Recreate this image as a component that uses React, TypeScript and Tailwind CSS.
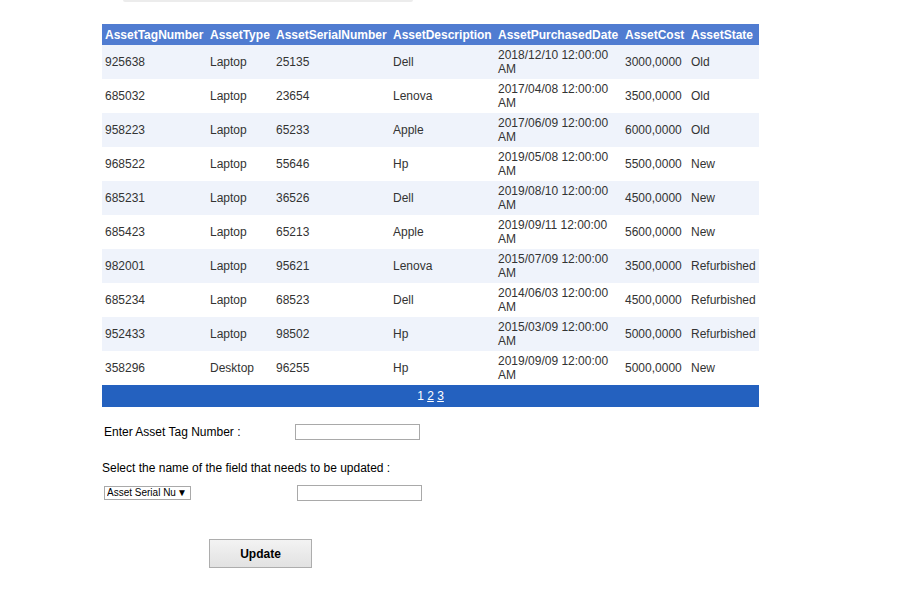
const rows = [
    ['925638', 'Laptop', '25135', 'Dell', '2018/12/10 12:00:00 AM', '3000,0000', 'Old'],
    ['685032', 'Laptop', '23654', 'Lenova', '2017/04/08 12:00:00 AM', '3500,0000', 'Old'],
    ['958223', 'Laptop', '65233', 'Apple', '2017/06/09 12:00:00 AM', '6000,0000', 'Old'],
    ['968522', 'Laptop', '55646', 'Hp', '2019/05/08 12:00:00 AM', '5500,0000', 'New'],
    ['685231', 'Laptop', '36526', 'Dell', '2019/08/10 12:00:00 AM', '4500,0000', 'New'],
    ['685423', 'Laptop', '65213', 'Apple', '2019/09/11 12:00:00 AM', '5600,0000', 'New'],
    ['982001', 'Laptop', '95621', 'Lenova', '2015/07/09 12:00:00 AM', '3500,0000', 'Refurbished'],
    ['685234', 'Laptop', '68523', 'Dell', '2014/06/03 12:00:00 AM', '4500,0000', 'Refurbished'],
    ['952433', 'Laptop', '98502', 'Hp', '2015/03/09 12:00:00 AM', '5000,0000', 'Refurbished'],
    ['358296', 'Desktop', '96255', 'Hp', '2019/09/09 12:00:00 AM', '5000,0000', 'New'],
]

const headers = ['AssetTagNumber', 'AssetType', 'AssetSerialNumber', 'AssetDescription', 'AssetPurchasedDate', 'AssetCost', 'AssetState']
const widths = ['w-[105px]', 'w-[66px]', 'w-[117px]', 'w-[105px]', 'w-[127px]', 'w-[66px]', 'w-[71px]']

const App = () => {
    return (
        <div className="min-h-[605px] w-[903px] bg-white font-['Liberation_Sans',Arial,sans-serif] text-[12px]">
            <div className="ml-[123px] h-[2px] w-[290px] rounded-b bg-[#ececec]"></div>

            <table className="ml-[102px] mt-[22px] w-[657px] table-fixed border-collapse text-[#333333]">
                <colgroup>
                    {widths.map((w, i) => <col key={i} className={w} />)}
                </colgroup>
                <thead>
                    <tr className="h-[21px] bg-[#507cd1] text-white">
                        {headers.map(h => (
                            <th key={h} className="px-[3px] text-left font-bold whitespace-nowrap">{h}</th>
                        ))}
                    </tr>
                </thead>
                <tbody>
                    {rows.map((r, i) => (
                        <tr key={r[0]} className={i % 2 === 0 ? 'h-[34px] bg-[#eff3fb]' : 'h-[34px] bg-white'}>
                            {r.map((c, j) => (
                                <td key={j} className="px-[3px] align-middle leading-[14px]">{c}</td>
                            ))}
                        </tr>
                    ))}
                    <tr className="h-[22px] bg-[#2461bf] text-white">
                        <td colSpan={7} className="text-center">
                            <span>1</span> <a className="underline">2</a> <a className="underline">3</a>
                        </td>
                    </tr>
                </tbody>
            </table>

            <div className="ml-[104px] mt-[16px] flex items-center">
                <span className="w-[191px] text-black">Enter Asset Tag Number :</span>
                <input type="text" className="h-[16px] w-[125px] border border-[#a9a9a9] bg-white" />
            </div>

            <p className="ml-[102px] mt-[18px] text-black">Select the name of the field that needs to be updated :</p>

            <div className="ml-[104px] mt-[8px] flex items-center">
                <div className="flex h-[14px] w-[87px] items-center justify-between border border-[#a9a9a9] bg-white pl-[2px] pr-[3px] text-[10px] leading-[12px] text-black">
                    <span className="overflow-hidden whitespace-nowrap">Asset Serial Nu</span>
                    <span className="text-[10px]">▼</span>
                </div>
                <input type="text" className="ml-[106px] h-[16px] w-[125px] border border-[#a9a9a9] bg-white" />
            </div>

            <button className="ml-[209px] mt-[38px] h-[29px] w-[103px] border border-[#adadad] bg-gradient-to-b from-[#f3f3f3] to-[#e2e2e2] font-bold text-black">
                Update
            </button>
        </div>
    )
}

export default App
